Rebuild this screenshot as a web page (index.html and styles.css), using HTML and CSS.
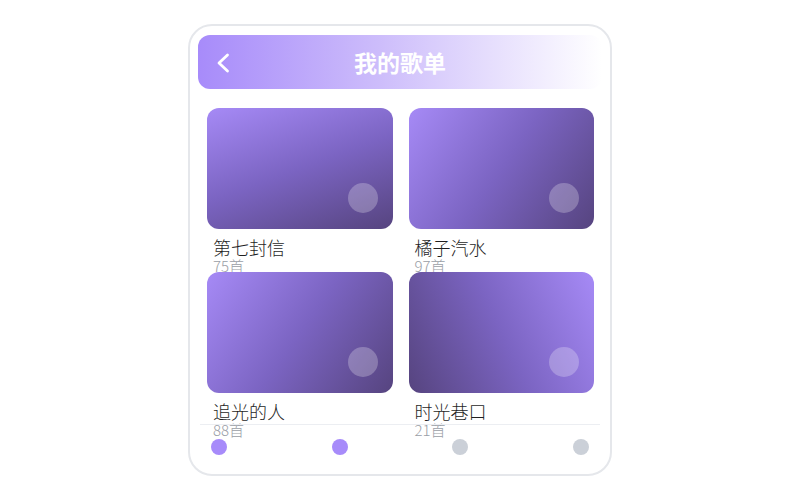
FILE: index.html
```html
<!DOCTYPE html>
<html lang="zh">
<head>
<meta charset="utf-8">
<link rel="stylesheet" href="styles.css">
</head>
<body>
<div class="phone">
  <header class="topbar">
    <span class="back">
      <svg width="14" height="20" viewBox="0 0 14 20"><path d="M11.5 2 L3 10 L11.5 18" fill="none" stroke="#fff" stroke-width="2.8" stroke-linecap="round" stroke-linejoin="round"/></svg>
    </span>
    <h1 class="title">我的歌单</h1>
  </header>
  <main class="content">
    <div class="grid">
      <div class="item">
        <div class="cover cover-a"><span class="dot-deco"></span></div>
        <div class="name">第七封信</div>
        <div class="count">75首</div>
      </div>
      <div class="item">
        <div class="cover cover-b"><span class="dot-deco"></span></div>
        <div class="name">橘子汽水</div>
        <div class="count">97首</div>
      </div>
      <div class="item">
        <div class="cover cover-c"><span class="dot-deco"></span></div>
        <div class="name">追光的人</div>
        <div class="count">88首</div>
      </div>
      <div class="item">
        <div class="cover cover-d"><span class="dot-deco"></span></div>
        <div class="name">时光巷口</div>
        <div class="count">21首</div>
      </div>
    </div>
  </main>
  <nav class="tabbar">
    <span class="tab on"></span>
    <span class="tab on"></span>
    <span class="tab"></span>
    <span class="tab"></span>
  </nav>
</div>
</body>
</html>
```
FILE: styles.css
```css
html, body {
  margin: 0;
  padding: 0;
  background: #ffffff;
}
body {
  width: 800px;
  height: 500px;
  display: flex;
  align-items: center;
  justify-content: center;
  font-family: "Noto Sans CJK SC", "Noto Sans", sans-serif;
}
.phone {
  box-sizing: border-box;
  width: 424px;
  height: 452px;
  border: 2px solid #e5e7eb;
  border-radius: 24px;
  background: #fff;
  padding: 9px 8px 8px;
  display: flex;
  flex-direction: column;
}
.topbar {
  position: relative;
  height: 54px;
  flex: 0 0 54px;
  border-radius: 12px;
  background: linear-gradient(90deg, #a78bfa 0%, #cdbdfb 45%, #ffffff 100%);
  display: flex;
  align-items: center;
  justify-content: center;
}
.back {
  position: absolute;
  left: 18px;
  top: 18px;
  width: 14px;
  height: 20px;
  display: flex;
}
.title {
  margin: 0;
  color: #fff;
  font-size: 23px;
  font-weight: 700;
  line-height: 1;
}
.content {
  flex: 1 1 auto;
  min-height: 0;
  padding: 19px 8px 0 9px;
}
.grid {
  display: grid;
  grid-template-columns: 1fr 1fr;
  grid-auto-rows: 148px;
  column-gap: 16px;
  row-gap: 16px;
}
.item {
  min-height: 0;
}
.cover {
  position: relative;
  height: 121px;
  border-radius: 12px;
}
.cover-a { background: linear-gradient(160deg, #a68af6 0%, #7b64c2 50%, #56447f 100%); }
.cover-b { background: linear-gradient(125deg, #a68af6 0%, #7b64c2 50%, #56447f 100%); }
.cover-c { background: linear-gradient(125deg, #a68af6 0%, #7b64c2 50%, #56447f 100%); }
.cover-d { background: linear-gradient(245deg, #a68af6 0%, #7b64c2 50%, #56447f 100%); }
.dot-deco {
  position: absolute;
  right: 15px;
  bottom: 16px;
  width: 30px;
  height: 30px;
  border-radius: 50%;
  background: rgba(255, 255, 255, 0.25);
}
.name {
  margin-top: 8px;
  padding-left: 6px;
  font-size: 18px;
  font-weight: 300;
  line-height: 21px;
  color: #1f1f1f;
}
.count {
  padding-left: 6px;
  font-size: 15px;
  font-weight: 300;
  line-height: 16px;
  color: #9a9ea6;
}
.tabbar {
  flex: 0 0 auto;
  margin: 0 2px;
  border-top: 1px solid #eceef2;
  padding: 14px 11px 11px;
  display: flex;
  justify-content: space-between;
}
.tab {
  width: 16px;
  height: 16px;
  border-radius: 50%;
  background: #cbd0d8;
}
.tab.on {
  background: #a78bfa;
}
```
